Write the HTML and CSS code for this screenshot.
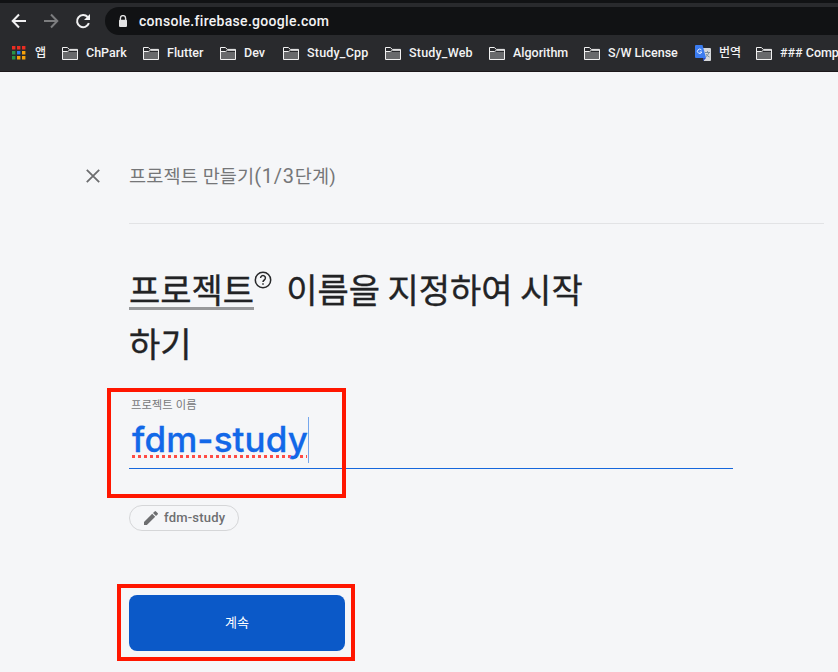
FILE: index.html
```html
<!DOCTYPE html>
<html lang="ko">
<head>
<meta charset="utf-8">
<title>Firebase</title>
<link rel="stylesheet" href="styles.css">
</head>
<body>
<svg width="0" height="0" class="defs">
  <symbol id="folder" viewBox="0 0 16 13"><path d="M.5 .5h5l1.7 2h8.3v10H.5z" fill="#292a2d"/><path d="M1 5h14v7H1z" fill="#68696b"/><path d="M.5 12.5V.5h4.8l2 1.9h8.2v10.1zM.5 4.5h5l2-1.2h8" fill="none" stroke="#f1f1f1"/></symbol>
</svg>
<header class="browser">
  <div class="toolbar">
    <svg class="nav" viewBox="0 0 16 16"><path d="M15 8H2M8 1.5 1.7 8 8 14.5"/></svg>
    <svg class="nav dim" viewBox="0 0 16 16"><path d="M1 8h13M8 1.5 14.3 8 8 14.5"/></svg>
    <svg class="nav" viewBox="0 0 16 16"><path d="M13.9 10.2A6.1 6.1 0 1 1 12.7 4"/><path class="solid" d="M15 1v6H9z"/></svg>
    <div class="address">
      <svg width="10" height="13" viewBox="0 0 10 13"><path d="M2.4 5.5V3.2a2.6 2.6 0 0 1 5.2 0v2.3" fill="none" stroke="#e3e3e4" stroke-width="1.4"/><rect x="1" y="4.7" width="8" height="7.2" rx=".8" fill="#e3e3e4"/></svg>
      <span>console.firebase.google.com</span>
    </div>
  </div>
  <nav class="bookmarks">
    <a class="apps"><svg width="14" height="14" viewBox="0 0 14 14"><path fill="#ea2d22" d="M0 0h3.4v3.4H0zM5 0h3.4v3.4H5zM10 0h3.4v3.4H10z"/><path fill="#289447" d="M0 5h3.4v3.4H0zM0 10h3.4v3.4H0z"/><path fill="#297cf0" d="M5 5h3.4v3.4H5z"/><path fill="#f5a20b" d="M10 5h3.4v3.4H10zM5 10h3.4v3.4H5zM10 10h3.4v3.4H10z"/></svg><span>앱</span></a>
    <a><svg class="folder"><use href="#folder"/></svg><span>ChPark</span></a>
    <a><svg class="folder"><use href="#folder"/></svg><span>Flutter</span></a>
    <a><svg class="folder"><use href="#folder"/></svg><span>Dev</span></a>
    <a><svg class="folder"><use href="#folder"/></svg><span class="wide">Study_Cpp</span></a>
    <a><svg class="folder"><use href="#folder"/></svg><span class="wide">Study_Web</span></a>
    <a><svg class="folder"><use href="#folder"/></svg><span>Algorithm</span></a>
    <a><svg class="folder"><use href="#folder"/></svg><span>S/W License</span></a>
    <a><svg width="16" height="16" viewBox="0 0 16 16"><path d="M6 3h9q1 0 1 1v11q0 1-1 1H9z" fill="#d5d7da"/><path d="M10 7.5h5M12.5 6v1.5M14 7.5q-1 3-3.5 4.5M11 9q1 2 3.5 3" fill="none" stroke="#70889a" stroke-width=".9"/><path d="m8 13 3 0-2.7 3z" fill="#2547c5"/><path d="M1 0h6.5l3.6 13H1q-1 0-1-1V1q0-1 1-1z" fill="#3b7cf0"/><path d="M6.5 5A2.2 2.2 0 1 0 6.8 7H4.7" fill="none" stroke="#e7efff"/></svg><span class="korean">번역</span></a>
    <a><svg class="folder"><use href="#folder"/></svg><span>### Comp</span></a>
  </nav>
</header>
<main>
  <div class="step">
    <svg class="close" viewBox="0 0 14 14"><path d="m.8.8 12.4 12.4M13.2.8.8 13.2"/></svg>
    <span>프로젝트 만들기<b>(1/3</b>단계)</span>
  </div>
  <section class="content">
    <h1><span class="term">프로젝트</span><svg class="help" viewBox="0 0 18 18"><circle cx="9" cy="9" r="7.7"/><path d="M6.6 7a2.4 2.4 0 1 1 3.7 2Q9 9.8 9 11"/><path d="M9 12.2v1.6"/></svg><span class="rest">이름을 지정하여 시작</span><br>하기</h1>
    <div class="field">
      <label>프로젝트 이름</label>
      <div class="value"><span>fdm-study</span><i class="caret"></i></div>
      <div class="mark mark-field"></div>
    </div>
    <div class="chip"><svg width="14" height="14" viewBox="0 0 14 14"><path d="M0 11.1V14h2.9l8.3-8.2-3-3zM9 2l3 3 1.6-1.6q.7-.7 0-1.4L12 .4q-.7-.6-1.4 0z" fill="#6d6e70"/></svg><span>fdm-study</span></div>
    <div class="action"><button>계속</button><div class="mark mark-button"></div></div>
  </section>
</main>
</body>
</html>
```
FILE: styles.css
```css
* { box-sizing: border-box; }
body { margin: 0; width: 838px; height: 672px; overflow: hidden; background: #f5f6f8; font-family: Roboto, "Noto Sans CJK KR", sans-serif; }
.defs { position: absolute; }
.browser { height: 72px; background: #292a2d; border-top: 3px solid #111214; border-bottom: 1px solid #1c181b; overflow: hidden; color: #f3f3f4; }
.toolbar { display: flex; align-items: center; height: 28px; margin-top: 4px; padding-left: 11px; }
.nav { width: 16px; height: 16px; margin-right: 16px; fill: none; stroke: #f1f1f2; stroke-width: 2; flex: none; }
.nav.dim { stroke: #7c7d7f; }
.nav .solid { fill: #f1f1f2; stroke: none; }
.address { flex: 1; height: 28px; margin-left: -2px; border-radius: 14px 0 0 14px; background: #111214; display: flex; align-items: center; padding-left: 13px; gap: 11px; font: 500 14px/28px Roboto, sans-serif; letter-spacing: .3px; }
.bookmarks { display: grid; grid-template-columns: 50px 81px 77px 63px 102px 104px 95px 111px 61px 120px; padding-left: 12px; height: 36px; align-items: center; font: 500 12.5px/16px Roboto, "Noto Sans CJK KR", sans-serif; white-space: nowrap; }
.bookmarks a { display: flex; align-items: center; gap: 8px; }
.bookmarks .apps { gap: 9px; font-size: 12px; }
.bookmarks .korean { font-size: 12px; }
.bookmarks .wide { letter-spacing: .2px; }
.folder { width: 16px; height: 13px; flex: none; }
.step { display: flex; align-items: center; height: 24px; margin: 92px 0 35px; padding-left: 86px; gap: 29px; font-size: 18.6px; color: #757678; white-space: nowrap; }
.step span { margin-top: -4px; letter-spacing: .12px; }
.step b { font-weight: 400; font-size: 20px; letter-spacing: .7px; }
.close { width: 14px; height: 14px; fill: none; stroke: #6c6d6f; stroke-width: 1.8; }
.content { margin-left: 129px; width: 695px; border-top: 1px solid #e2e3e5; }
h1 { margin: 38px 0 0; font: 400 34px/54px "Noto Sans CJK KR", sans-serif; color: #222325; white-space: nowrap; -webkit-text-stroke: .35px #222325; }
.term { display: inline-block; height: 48px; line-height: 54px; border-bottom: 3px solid #98999b; vertical-align: top; }
.help { width: 18px; height: 18px; margin: 9px 14px 0 0; vertical-align: top; fill: none; stroke: #28292b; stroke-width: 1.5; }
.rest { word-spacing: -2px; }
.field { position: relative; width: 604px; height: 99px; border-bottom: 1px solid #1667dc; padding-top: 24px; }
.field label { display: block; height: 20px; padding-left: 2px; font: 11.3px/20px "Noto Sans CJK KR", sans-serif; color: #77787a; }
.value { display: flex; height: 46px; margin: 3px 0 0 3px; color: #1268e8; font: 500 35px/44px Inter, sans-serif; letter-spacing: .1px; -webkit-text-stroke: .3px #1268e8; }
.value span { text-decoration: underline dotted #ff4b45 2.5px; text-underline-offset: 3px; text-decoration-skip-ink: none; }
.caret { width: 1px; background: #75a7ed; }
.mark { position: absolute; border: 4px solid #ff1600; }
.mark-field { left: -22px; top: 18px; width: 239px; height: 110px; }
.chip { display: flex; align-items: center; width: 110px; height: 26px; margin-top: 36px; padding-left: 14px; gap: 6px; border: 1px solid #d5d6d8; border-radius: 13px; font-weight: 500; font-size: 13px; letter-spacing: .2px; color: #6e6f71; white-space: nowrap; }
.chip span { margin-top: -2px; }
.action { position: relative; width: 216px; height: 56px; margin-top: 64px; }
.action button { width: 216px; height: 56px; border: 0; border-radius: 8px; background: #0b59c8; color: #fff; font: 13px/20px "Noto Sans CJK KR", sans-serif; padding: 0 0 2px; }
.mark-button { left: -12px; top: -11px; width: 238px; height: 77px; }
```
